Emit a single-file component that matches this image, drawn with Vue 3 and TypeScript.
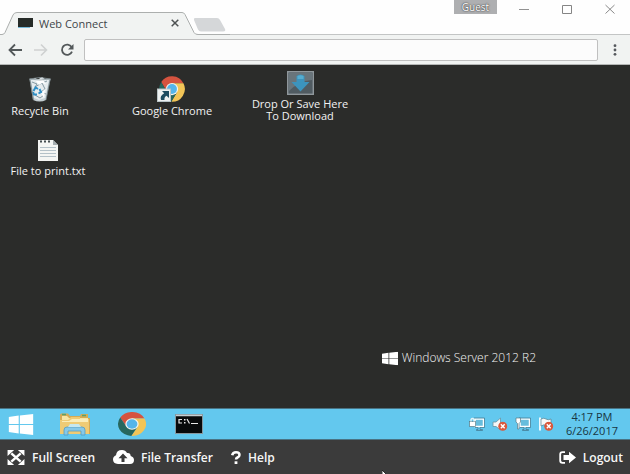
<script setup lang="ts">
import { ref } from 'vue'

interface DesktopItem {
  id: string
  label: string
  icon: 'bin' | 'chrome' | 'drop' | 'file'
}

const items: DesktopItem[] = [
  { id: 'bin', label: 'Recycle Bin', icon: 'bin' },
  { id: 'chrome', label: 'Google Chrome', icon: 'chrome' },
  { id: 'drop', label: 'Drop Or Save Here To Download', icon: 'drop' },
  { id: 'file', label: 'File to print.txt', icon: 'file' },
]

const address = ref('')
</script>

<template>
  <div class="window">
    <svg class="defs" aria-hidden="true">
      <symbol id="chrome-logo" viewBox="0 0 48 48">
        <path d="M5.54 12.03A22 22 0 0 1 43.6 14H24L15.34 29Z" fill="#d5533f" />
        <path d="M43.6 14A22 22 0 0 1 22.86 45.97L32.66 29L24 14Z" fill="#f2c557" />
        <path d="M22.86 45.97A22 22 0 0 1 5.54 12.03L15.34 29H32.66Z" fill="#27675e" />
        <circle cx="24" cy="24" r="10.5" fill="#f4f4ee" />
        <circle cx="24" cy="24" r="8.5" fill="#55b5ea" />
      </symbol>
      <symbol id="windows-flag" viewBox="0 0 26 22">
        <path d="M0 3.2L10.6 1.7V10.4H0ZM11.8 1.5L26 0V10.4H11.8ZM0 11.6H10.6V20.3L0 18.8ZM11.8 11.6H26V22L11.8 20.5Z" fill="#fff" />
      </symbol>
      <symbol id="error-badge" viewBox="0 0 10 10">
        <circle cx="5" cy="5" r="4.7" fill="#d9583c" />
        <path d="M3 3L7 7M7 3L3 7" stroke="#fff" stroke-width="1.5" />
      </symbol>
    </svg>

    <header class="titlebar">
      <svg class="tab-shape" viewBox="0 0 230 24" aria-hidden="true">
        <path d="M0 22.5H2Q4 22.5 5 20.5L13 3Q14 .5 17 .5H182Q184 .5 185 2.5L194 20.5Q195 22.5 198 22.5H230V24H0Z" fill="#f1f3f2" />
        <path d="M0 22.5H2Q4 22.5 5 20.5L13 3Q14 .5 17 .5H182Q184 .5 185 2.5L194 20.5Q195 22.5 198 22.5H230" fill="none" stroke="#acafae" />
        <path d="M195 6H217Q219 6 220 8L225 17Q226 19.500 223 19.500H201Q199 19.500 198 17.500L194 8Q193.500 6 195 6Z" fill="#d5d7d9" />
      </svg>
      <div class="tab">
        <svg class="favicon" viewBox="0 0 15 10" aria-hidden="true">
          <rect width="15" height="9" fill="#262b28" />
          <path d="M0 9.500H12" stroke="#77b9d8" />
        </svg>
        <span class="tab-title">Web Connect</span>
        <button class="tab-close" aria-label="Close tab">
          <svg viewBox="0 0 8 8"><path d="M.7 .7L7.300 7.300M7.300 .7L.7 7.300" stroke="#4d5152" stroke-width="1.500" /></svg>
        </button>
      </div>
      <div class="window-controls">
        <button class="guest">Guest</button>
        <button class="control" aria-label="Minimize"><svg viewBox="0 0 10 10"><path d="M0 5.500H10" stroke="#929292" /></svg></button>
        <button class="control" aria-label="Maximize"><svg viewBox="0 0 10 10"><path d="M.5 1.500H9.500V9.500H.5Z" fill="none" stroke="#858585" /></svg></button>
        <button class="control" aria-label="Close"><svg viewBox="0 0 10 10"><path d="M.5 1L9.500 9.500M9.500 1L.5 9.500" stroke="#8a8a8a" /></svg></button>
      </div>
    </header>

    <nav class="toolbar">
      <button class="nav-button" aria-label="Back">
        <svg viewBox="0 0 14 14"><path d="M14 7H1.500M7 1.500L1.500 7L7 12.500" fill="none" stroke="#53585a" stroke-width="1.800" /></svg>
      </button>
      <button class="nav-button" aria-label="Forward">
        <svg viewBox="0 0 14 14"><path d="M0 7H12.500M7 1.500L12.500 7L7 12.500" fill="none" stroke="#cfd1d1" stroke-width="1.600" /></svg>
      </button>
      <button class="nav-button" aria-label="Reload">
        <svg viewBox="0 0 14 14">
          <path d="M11.600 4A5.200 5.200 0 1 0 12 8.700" fill="none" stroke="#53585a" stroke-width="1.800" />
          <path d="M13.500 1V6.500H8Z" fill="#53585a" />
        </svg>
      </button>
      <input v-model="address" class="address" type="text" aria-label="Address" />
      <button class="more" aria-label="Menu">
        <svg viewBox="0 0 4 12"><circle cx="2" cy="1.700" r="1.400" /><circle cx="2" cy="6" r="1.400" /><circle cx="2" cy="10.300" r="1.400" /></svg>
      </button>
    </nav>

    <main class="desktop">
      <button v-for="item in items" :key="item.id" class="shortcut" :class="`at-${item.id}`">
        <svg v-if="item.icon === 'bin'" class="shortcut-icon bin-icon" viewBox="0 0 24 26">
          <path d="M1.500 3L5 24Q12 27 18 24L22.500 3Z" fill="#c3ced2" />
          <path d="M3 4L7 2L10 3.500L14 1L17 3L21 3.500L19 13L17 22L11 24L6 22Z" fill="#e6ecee" />
          <path d="M4 6L9 8L7 11L12 8L19 5M7 19L12 22L16 19M14 7L17 13L13 16L18 18" fill="none" stroke="#8599a2" />
          <path d="M8 5L14 3L18 8L14 7L11 9ZM13 17L17 13L16 22Z" fill="#fff" />
          <path d="M5.500 15L7.500 11.500L10 13M11.500 13L13 16L10.500 17.500M9 18.500H6L5 16" fill="none" stroke="#2f8fc6" stroke-width="2" />
          <path d="M1.500 3Q12 0 22.500 3Q12 5 1.500 3Z" fill="none" stroke="#8d9a9f" stroke-width=".8" />
          <path d="M2 4L5.500 24M22 4L18 24" stroke="#6f7c80" stroke-width=".8" />
        </svg>
        <svg v-else-if="item.icon === 'chrome'" class="shortcut-icon chrome-icon" viewBox="0 0 30 26">
          <use href="#chrome-logo" x="1" y="-1" width="28" height="28" />
          <rect x=".5" y="13" width="13" height="12.500" fill="#eef1f1" stroke="#b9c4c6" />
          <path d="M5 15H12V22L9.500 19.700Q7 21 7.500 24H4Q2.500 20 7.200 17.300Z" fill="#1d4c60" />
        </svg>
        <svg v-else-if="item.icon === 'drop'" class="shortcut-icon drop-icon" viewBox="0 0 27 24">
          <rect x=".7" y=".7" width="25.600" height="22.600" fill="#505b61" stroke="#8f979b" stroke-width="1.400" />
          <path d="M2 2H25V9Q12 10 2 20Z" fill="#69757b" />
          <path d="M9.500 5Q13.500 2 17.500 5V11H22.500L13.500 20.500L4.500 11H9.500Z" fill="#3c94bd" />
          <path d="M10.500 5Q13.500 3.500 16.500 5V8H10.500Z" fill="#56add0" />
        </svg>
        <svg v-else class="shortcut-icon file-icon" viewBox="0 0 20 22">
          <path d="M0 1H15L20 6V22H0Z" fill="#f4f5f3" />
          <path d="M15 1L20 6H15Z" fill="#a5adb0" />
          <path d="M2 2.500H4M6 2.500H8M10 2.500H12" stroke="#454d50" stroke-width="1.800" />
          <path d="M2 8.500H18M2 11.500H18M2 14.500H18M2 17.500H18" stroke="#b4c1c8" />
        </svg>
        <span>{{ item.label }}</span>
      </button>

      <div class="brand">
        <svg viewBox="0 0 26 22"><use href="#windows-flag" /></svg>
        <span>Windows Server 2012 R2</span>
      </div>
    </main>

    <div class="taskbar">
      <div class="apps">
        <button class="app start" aria-label="Start"><svg class="start-icon" viewBox="0 0 26 22"><use href="#windows-flag" /></svg></button>
        <button class="app" aria-label="File Explorer">
          <svg class="folder-icon" viewBox="0 0 30 24">
            <path d="M0 3Q0 1.500 1.500 1.500H8L10 4H20L21 2H28V6H30V22H0Z" fill="#d5ab55" />
            <path d="M2 4H7L9 6H28V20H2Z" fill="#f8e6a4" />
            <path d="M0 8H8L11 5H20V7H29V22H0Z" fill="#efcb74" />
            <path d="M2 9H9L12 7H28V10H2Z" fill="#faedb9" />
            <path d="M2 2.500H6M22 3.500H26" stroke="#5aa26b" stroke-width="1.500" />
            <path d="M4 23V18Q4 15 7 15H22Q25 15 25 18V23H21V19H8V23Z" fill="#86c9e8" stroke="#549dc0" stroke-width=".8" />
            <path d="M8 15L10 12H19L21 15Z" fill="#c7e8ef" />
          </svg>
        </button>
        <button class="app" aria-label="Google Chrome"><svg class="task-chrome" viewBox="2 2 44 44" preserveAspectRatio="none"><use href="#chrome-logo" width="48" height="48" /></svg></button>
        <button class="app" aria-label="Command Prompt">
          <svg class="prompt-icon" viewBox="0 0 28 20">
            <rect x=".5" y=".5" width="27" height="19" fill="#080a0b" stroke="#87979e" />
            <path d="M1 1.500H27" stroke="#c4ced2" stroke-width="1.500" />
            <path d="M7 5.500H4V9H7M12 5L14.500 9.500M16 9.500H23" fill="none" stroke="#e8e8e8" stroke-width="1.200" />
            <path d="M9 5H10.500V6.500H9ZM9 8H10.500V9.500H9Z" fill="#e8e8e8" />
          </svg>
        </button>
      </div>
      <div class="tray">
        <button class="tray-button" aria-label="Secure connection">
          <svg viewBox="0 0 16 14">
            <path d="M6 2H14.500V9.500H6Z" fill="#67bddd" stroke="#fff" stroke-width="1.500" />
            <path d="M5 1H15.500V10.500H11V12.500H13.500V13.500H7.500V12.500H9V10.500H6" fill="none" stroke="#40748a" stroke-width=".7" />
            <rect x=".5" y="4.500" width="6" height="5" fill="#fff" stroke="#567985" stroke-width=".7" />
            <path d="M2 4.500V2.500Q3.500 .5 5 2.500V4.500" fill="none" stroke="#e9f4f7" stroke-width="1.300" />
          </svg>
        </button>
        <button class="tray-button" aria-label="Volume">
          <svg viewBox="0 0 16 14">
            <path d="M1 5H4L8.500 1V13L4 9.500H1Z" fill="#f4f7f7" stroke="#6b929f" stroke-width=".8" />
            <use href="#error-badge" x="6" y="4.500" width="9.500" height="9.500" />
          </svg>
        </button>
        <button class="tray-button" aria-label="Network">
          <svg viewBox="0 0 16 14">
            <path d="M5 2H14.500V9.500H5Z" fill="#67bddd" stroke="#fff" stroke-width="1.500" />
            <path d="M4 1H15.500V10.500H11V12.500H13.500V13.500H7.500V12.500H9V10.500H5" fill="none" stroke="#40748a" stroke-width=".7" />
            <path d="M1 1H5.500V5L4 6.500V12H2.500V6.500L1 5Z" fill="#fff" stroke="#567985" stroke-width=".7" />
          </svg>
        </button>
        <button class="tray-button" aria-label="Action Center">
          <svg viewBox="0 0 16 14">
            <path d="M2 .5V13.500" stroke="#fff" stroke-width="1.800" />
            <path d="M3 2Q6 .5 8 2T13 2V9Q10 10 8 8.500T3 9Z" fill="#f7f8f7" stroke="#55808f" stroke-width=".7" />
            <use href="#error-badge" x="6" y="4.500" width="9.500" height="9.500" />
          </svg>
        </button>
      </div>
      <div class="clock"><span>4:17 PM</span><span>6/26/2017</span></div>
    </div>

    <footer class="actions">
      <button class="action">
        <svg class="full-icon" viewBox="0 0 18 16">
          <path d="M4 3.500L14 12.500M14 3.500L4 12.500" stroke="#fff" stroke-width="2.600" />
          <path d="M0 0H7L0 6.500ZM18 0V6.500L11 0ZM0 16V9.500L7 16ZM18 16H11L18 9.500Z" fill="#fff" />
        </svg>
        <span>Full Screen</span>
      </button>
      <button class="action">
        <svg class="cloud-icon" viewBox="0 0 21 14">
          <path d="M5 14Q0 13.500 0 9.500Q0 6.500 3 5.300Q3.500 0 9 0Q12.500 0 14 3Q17.500 2.500 17.700 6Q21 7 21 10Q21 14 17 14Z" fill="#fff" />
          <path d="M10 3.500L14.500 8.200H11.500V12H8.500V8.200H5.500Z" fill="#3b3b3b" />
        </svg>
        <span>File Transfer</span>
      </button>
      <button class="action">
        <svg class="help-icon" viewBox="0 0 10 13">
          <path d="M1.200 4.200Q1.800 1.300 5 1.300Q8.500 1.300 8.500 4Q8.500 5.600 6.500 6.500Q5 7.200 5 8.500" fill="none" stroke="#fff" stroke-width="2.500" />
          <rect x="3.600" y="10.300" width="2.800" height="2.700" fill="#fff" />
        </svg>
        <span>Help</span>
      </button>
      <button class="action logout">
        <svg class="logout-icon" viewBox="0 0 17 13">
          <path d="M6 1.200H3.500Q1.200 1.200 1.200 3.500V9.500Q1.200 11.800 3.500 11.800H6" fill="none" stroke="#fff" stroke-width="1.800" />
          <path d="M4.500 4H10V.8L17 6.500L10 12.200V9H4.500Z" fill="#fff" />
        </svg>
        <span>Logout</span>
      </button>
      <svg class="pointer" viewBox="0 0 5 7" aria-hidden="true"><path d="M0 0L5 5L3 5.500L0 7Z" fill="#fff" stroke="#111" stroke-width=".8" /></svg>
    </footer>
  </div>
</template>

<style>
body {
  margin: 0;
}
</style>

<style scoped>
.window {
  position: relative;
  display: flex;
  flex-direction: column;
  min-height: 100vh;
  overflow: hidden;
  background: #2b2c2a;
  font-family: "Open Sans", "Noto Sans", sans-serif;
  font-size: 11px;
}
.defs {
  position: absolute;
  width: 0;
  height: 0;
}
svg {
  display: block;
  flex: none;
}
button {
  margin: 0;
  padding: 0;
  border: 0;
  background: none;
  color: inherit;
  font: inherit;
}
.titlebar {
  position: relative;
  display: flex;
  align-items: flex-end;
  justify-content: space-between;
  height: 35px;
  box-sizing: border-box;
  border-bottom: 1px solid #c3c5c5;
  background: #fefefe;
}
.tab-shape {
  position: absolute;
  left: 0;
  top: 12px;
  width: 230px;
  height: 24px;
}
.tab {
  position: relative;
  display: flex;
  align-items: center;
  width: 161px;
  height: 22px;
  padding-left: 18px;
  color: #3e4549;
}
.favicon {
  width: 15px;
  height: 10px;
  margin-right: 6px;
}
.tab-title {
  flex: 1;
  text-align: left;
}
.tab-close,
.tab-close svg {
  width: 8px;
  height: 8px;
}
.window-controls {
  display: flex;
  align-self: flex-start;
  gap: 33px;
  padding-right: 15px;
}
.guest {
  width: 43px;
  height: 14px;
  margin-right: -11px;
  background: #aeafb1;
  color: #fff;
  font-size: 10px;
  line-height: 12px;
  text-shadow: 0 0 1px #333, 0 0 2px #444;
}
.control {
  padding-top: 4px;
}
.control svg {
  width: 10px;
  height: 10px;
}
.toolbar {
  position: relative;
  display: flex;
  align-items: center;
  gap: 12px;
  height: 30px;
  box-sizing: border-box;
  padding: 0 12px 0 8px;
  border-bottom: 1px solid #b5b7b6;
  background: #f1f3f2;
}
.nav-button,
.nav-button svg {
  width: 14px;
  height: 14px;
}
.address {
  flex: 1;
  min-width: 0;
  height: 22px;
  margin-left: -2px;
  box-sizing: border-box;
  border: 1px solid #c0c0c0;
  border-radius: 2px;
  background: #fcfcfc;
  font: inherit;
}
.more svg {
  width: 4px;
  height: 12px;
  fill: #55585d;
}
.more {
  padding: 0 1px 0 3px;
}
.desktop {
  position: relative;
  flex: 1;
  min-height: 340px;
}
.shortcut {
  position: absolute;
  display: flex;
  flex-direction: column;
  align-items: center;
  gap: 3px;
  width: 100px;
  color: #f2f2f2;
  line-height: 12px;
}
.at-bin {
  left: -10px;
  top: 11px;
}
.at-chrome {
  left: 122px;
  top: 11px;
}
.at-drop {
  left: 250px;
  top: 6px;
}
.at-file {
  left: -2px;
  top: 73px;
}
.bin-icon {
  width: 24px;
  height: 26px;
}
.chrome-icon {
  width: 30px;
  height: 26px;
}
.drop-icon {
  width: 27px;
  height: 24px;
}
.file-icon {
  width: 20px;
  height: 24px;
}
.brand {
  position: absolute;
  right: 94px;
  bottom: 41px;
  display: flex;
  align-items: center;
  gap: 4px;
  color: #f4f4f4;
  font-size: 12px;
  font-weight: 300;
  line-height: 18px;
}
.brand svg {
  width: 16px;
  height: 15px;
}
.taskbar {
  display: flex;
  align-items: center;
  height: 32px;
  box-sizing: border-box;
  padding: 0 12px 0 9px;
  border-top: 1px solid #497384;
  border-bottom: 1px solid #497384;
  background: #63c8ee;
}
.apps {
  display: flex;
  flex: 1;
  align-items: center;
  gap: 27px;
}
.app {
  display: flex;
  justify-content: center;
  width: 30px;
}
.start {
  width: 24px;
}
.start-icon {
  width: 26px;
  height: 21px;
}
.folder-icon {
  width: 30px;
  height: 24px;
}
.task-chrome {
  width: 28px;
  height: 24px;
}
.prompt-icon {
  width: 28px;
  height: 20px;
}
.tray {
  display: flex;
  gap: 7px;
}
.tray svg {
  width: 16px;
  height: 14px;
}
.clock {
  display: flex;
  flex-direction: column;
  align-items: center;
  margin-left: 12px;
  color: #183642;
  line-height: 14px;
}
.actions {
  position: relative;
  display: flex;
  align-items: center;
  gap: 18px;
  height: 34px;
  padding: 0 7px;
  background: #3b3b3b;
  color: #f7f7f7;
  font-size: 12px;
  font-weight: 600;
}
.action {
  display: flex;
  align-items: center;
  gap: 7px;
}
.logout {
  margin-left: auto;
}
.full-icon {
  width: 18px;
  height: 15px;
}
.cloud-icon {
  width: 21px;
  height: 14px;
}
.help-icon {
  width: 10px;
  height: 13px;
}
.logout-icon {
  width: 17px;
  height: 13px;
}
.pointer {
  position: absolute;
  left: 382px;
  bottom: -3px;
  width: 5px;
  height: 7px;
}
</style>
